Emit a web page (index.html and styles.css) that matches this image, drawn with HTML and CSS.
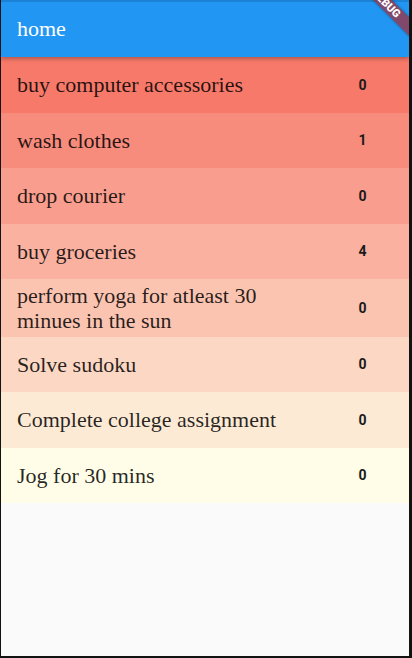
FILE: index.html
```html
<!DOCTYPE html>
<html>
<head>
<meta charset="utf-8">
<link rel="stylesheet" href="styles.css">
</head>
<body>
<div class="app">
  <header class="appbar"><span class="title">home</span></header>
  <ul class="list">
    <li class="row c1"><span class="text">buy computer accessories</span><span class="count">0</span></li>
    <li class="row c2"><span class="text">wash clothes</span><span class="count">1</span></li>
    <li class="row c3"><span class="text">drop courier</span><span class="count">0</span></li>
    <li class="row c4"><span class="text">buy groceries</span><span class="count">4</span></li>
    <li class="row c5 tall"><span class="text">perform yoga for atleast 30 minues in the sun</span><span class="count">0</span></li>
    <li class="row c6"><span class="text">Solve sudoku</span><span class="count">0</span></li>
    <li class="row c7"><span class="text">Complete college assignment</span><span class="count">0</span></li>
    <li class="row c8"><span class="text">Jog for 30 mins</span><span class="count">0</span></li>
  </ul>
  <div class="banner">DEBUG</div>
</div>
</body>
</html>
```
FILE: styles.css
```css
html, body {
  margin: 0;
  padding: 0;
  background: #121212;
}
.app {
  position: relative;
  margin-left: 1px;
  width: 408px;
  height: 656px;
  background: #fafafa;
  overflow: hidden;
}
.appbar {
  position: relative;
  z-index: 1;
  height: 55px;
  background: #2196f3;
  border-top: 2px solid #1c82d6;
  box-shadow: 0 2px 4px rgba(0, 0, 0, 0.28);
  box-sizing: content-box;
}
.title {
  display: block;
  padding: 16px 0 0 16px;
  font-family: "Liberation Serif", serif;
  font-size: 22px;
  line-height: 22px;
  color: #ffffff;
}
.list {
  list-style: none;
  margin: 0;
  padding: 0;
}
.row {
  display: flex;
  align-items: center;
  height: 55.5px;
  padding: 0 16px;
}
.row.tall {
  height: 57.5px;
}
.text {
  flex: 1;
  padding-right: 30px;
  font-family: "Liberation Serif", serif;
  font-size: 22px;
  line-height: 25px;
  color: rgba(0, 0, 0, 0.85);
}
.count {
  width: 61px;
  text-align: center;
  font-family: Roboto, "Liberation Sans", sans-serif;
  font-weight: 700;
  font-size: 14px;
  color: #1a1a1a;
}
.c1 { background: #f7796a; }
.c2 { background: #f88c7c; }
.c3 { background: #f99e8e; }
.c4 { background: #fab1a0; }
.c5 { background: #fbc4b1; }
.c6 { background: #fcd7c3; }
.c7 { background: #fdead5; }
.c8 { background: #fffde7; }
.banner {
  position: absolute;
  z-index: 2;
  left: 343px;
  top: -3px;
  width: 84px;
  height: 13px;
  transform: rotate(45deg);
  background: rgba(183, 28, 28, 0.63);
  box-shadow: 0 0 3px rgba(0, 0, 0, 0.4);
  color: #ffffff;
  font-family: Roboto, "Liberation Sans", sans-serif;
  font-weight: 900;
  font-size: 11px;
  line-height: 13px;
  text-align: center;
}
```
